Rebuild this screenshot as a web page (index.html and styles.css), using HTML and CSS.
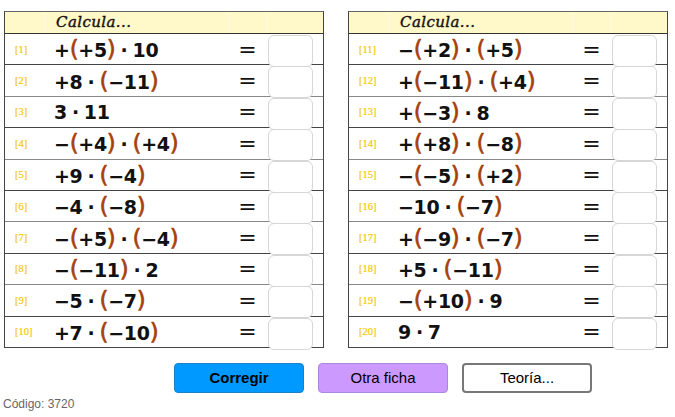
FILE: index.html
```html
<!DOCTYPE html>
<html>
<head>
<meta charset="utf-8">
<link rel="stylesheet" href="styles.css">
</head>
<body>
<div class="sheets">
  <div class="sheet">
    <div class="head"><div class="hc c-num"></div><div class="hc c-expr">Calcula...</div><div class="hc c-eq"></div><div class="hc c-box"></div></div>
    <div class="row"><div class="c-num">[1]</div><div class="c-expr">+<span class="p">(</span>+5<span class="p">)</span><span class="dot">·</span>10</div><div class="c-eq">=</div><div class="c-box"><div class="box"></div></div></div>
    <div class="row"><div class="c-num">[2]</div><div class="c-expr">+8<span class="dot">·</span><span class="p">(</span>−11<span class="p">)</span></div><div class="c-eq">=</div><div class="c-box"><div class="box"></div></div></div>
    <div class="row"><div class="c-num">[3]</div><div class="c-expr">3<span class="dot">·</span>11</div><div class="c-eq">=</div><div class="c-box"><div class="box"></div></div></div>
    <div class="row"><div class="c-num">[4]</div><div class="c-expr">−<span class="p">(</span>+4<span class="p">)</span><span class="dot">·</span><span class="p">(</span>+4<span class="p">)</span></div><div class="c-eq">=</div><div class="c-box"><div class="box"></div></div></div>
    <div class="row"><div class="c-num">[5]</div><div class="c-expr">+9<span class="dot">·</span><span class="p">(</span>−4<span class="p">)</span></div><div class="c-eq">=</div><div class="c-box"><div class="box"></div></div></div>
    <div class="row"><div class="c-num">[6]</div><div class="c-expr">−4<span class="dot">·</span><span class="p">(</span>−8<span class="p">)</span></div><div class="c-eq">=</div><div class="c-box"><div class="box"></div></div></div>
    <div class="row"><div class="c-num">[7]</div><div class="c-expr">−<span class="p">(</span>+5<span class="p">)</span><span class="dot">·</span><span class="p">(</span>−4<span class="p">)</span></div><div class="c-eq">=</div><div class="c-box"><div class="box"></div></div></div>
    <div class="row"><div class="c-num">[8]</div><div class="c-expr">−<span class="p">(</span>−11<span class="p">)</span><span class="dot">·</span>2</div><div class="c-eq">=</div><div class="c-box"><div class="box"></div></div></div>
    <div class="row"><div class="c-num">[9]</div><div class="c-expr">−5<span class="dot">·</span><span class="p">(</span>−7<span class="p">)</span></div><div class="c-eq">=</div><div class="c-box"><div class="box"></div></div></div>
    <div class="row"><div class="c-num">[10]</div><div class="c-expr">+7<span class="dot">·</span><span class="p">(</span>−10<span class="p">)</span></div><div class="c-eq">=</div><div class="c-box"><div class="box"></div></div></div>
  </div>
  <div class="sheet">
    <div class="head"><div class="hc c-num"></div><div class="hc c-expr">Calcula...</div><div class="hc c-eq"></div><div class="hc c-box"></div></div>
    <div class="row"><div class="c-num">[11]</div><div class="c-expr">−<span class="p">(</span>+2<span class="p">)</span><span class="dot">·</span><span class="p">(</span>+5<span class="p">)</span></div><div class="c-eq">=</div><div class="c-box"><div class="box"></div></div></div>
    <div class="row"><div class="c-num">[12]</div><div class="c-expr">+<span class="p">(</span>−11<span class="p">)</span><span class="dot">·</span><span class="p">(</span>+4<span class="p">)</span></div><div class="c-eq">=</div><div class="c-box"><div class="box"></div></div></div>
    <div class="row"><div class="c-num">[13]</div><div class="c-expr">+<span class="p">(</span>−3<span class="p">)</span><span class="dot">·</span>8</div><div class="c-eq">=</div><div class="c-box"><div class="box"></div></div></div>
    <div class="row"><div class="c-num">[14]</div><div class="c-expr">+<span class="p">(</span>+8<span class="p">)</span><span class="dot">·</span><span class="p">(</span>−8<span class="p">)</span></div><div class="c-eq">=</div><div class="c-box"><div class="box"></div></div></div>
    <div class="row"><div class="c-num">[15]</div><div class="c-expr">−<span class="p">(</span>−5<span class="p">)</span><span class="dot">·</span><span class="p">(</span>+2<span class="p">)</span></div><div class="c-eq">=</div><div class="c-box"><div class="box"></div></div></div>
    <div class="row"><div class="c-num">[16]</div><div class="c-expr">−10<span class="dot">·</span><span class="p">(</span>−7<span class="p">)</span></div><div class="c-eq">=</div><div class="c-box"><div class="box"></div></div></div>
    <div class="row"><div class="c-num">[17]</div><div class="c-expr">+<span class="p">(</span>−9<span class="p">)</span><span class="dot">·</span><span class="p">(</span>−7<span class="p">)</span></div><div class="c-eq">=</div><div class="c-box"><div class="box"></div></div></div>
    <div class="row"><div class="c-num">[18]</div><div class="c-expr">+5<span class="dot">·</span><span class="p">(</span>−11<span class="p">)</span></div><div class="c-eq">=</div><div class="c-box"><div class="box"></div></div></div>
    <div class="row"><div class="c-num">[19]</div><div class="c-expr">−<span class="p">(</span>+10<span class="p">)</span><span class="dot">·</span>9</div><div class="c-eq">=</div><div class="c-box"><div class="box"></div></div></div>
    <div class="row"><div class="c-num">[20]</div><div class="c-expr">9<span class="dot">·</span>7</div><div class="c-eq">=</div><div class="c-box"><div class="box"></div></div></div>
  </div>
</div>
<div class="buttons">
  <button class="btn btn-check">Corregir</button>
  <button class="btn btn-other">Otra ficha</button>
  <button class="btn btn-theory">Teoría...</button>
</div>
<div class="code">Código: 3720</div>
</body>
</html>
```
FILE: styles.css
```css
html, body {
  margin: 0;
  padding: 0;
  background: #fff;
}
body {
  width: 675px;
  height: 417px;
  overflow: hidden;
  font-family: "Liberation Sans", Arial, sans-serif;
}
.sheets {
  display: flex;
  gap: 24px;
  padding: 11px 0 0 4px;
}
.sheet {
  width: 318px;
  border: 1px solid #444;
  border-top: 1px solid #666;
}
.head {
  display: flex;
  height: 21px;
  background: #fff8c8;
  border-bottom: 1px solid #333;
}
.hc {
  border-right: 1px solid #fffbe2;
}
.hc.c-box { border-right: 0; }
.head .c-expr {
  font-family: "DejaVu Serif", "Liberation Serif", serif;
  font-style: italic;
  font-weight: normal;
  font-size: 15px;
  line-height: 21px;
  letter-spacing: 0.4px;
  padding-left: 11px;
  color: #111;
  -webkit-text-stroke: 0.4px #111;
}
.c-num { width: 39px; }
.c-expr { width: 185px; box-sizing: border-box; }
.c-eq { width: 37px; }
.c-box { width: 56px; }
.head .c-num, .row .c-num { flex: none; }
.row {
  display: flex;
  align-items: center;
  height: 30.4px;
  border-bottom: 1px solid #444;
}
.row:nth-child(odd) { border-bottom-color: #888; }
.row:last-child { border-bottom: 0; height: 30.4px; }
.row .c-num {
  font-family: "Liberation Serif", "Times New Roman", serif;
  font-size: 10.5px;
  color: #f5c800;
  padding-left: 10px;
  box-sizing: border-box;
  -webkit-text-stroke: 0.2px #f5c800;
}
.row .c-expr {
  font-family: "DejaVu Sans", sans-serif;
  font-weight: bold;
  font-size: 19px;
  color: #111;
  padding-left: 10px;
  white-space: nowrap;
  letter-spacing: -0.3px;
}
.p {
  color: #a5400c;
  font-weight: normal;
  font-family: "DejaVu Sans", sans-serif;
  font-size: 23px;
  -webkit-text-stroke: 0.6px #a5400c;
}
.dot {
  margin: 0 5px;
  font-weight: bold;
}
.row .c-eq {
  font-family: "DejaVu Sans", sans-serif;
  font-size: 22px;
  text-align: center;
  color: #111;
}
.row .c-box {
  position: relative;
  align-self: stretch;
}
.box {
  margin: 1px 0 0 2px;
  width: 43px;
  height: 30px;
  border: 1px solid #d6d6d6;
  border-radius: 6px;
  background: #fff;
  position: relative;
  z-index: 1;
}
.buttons {
  display: flex;
  gap: 14px;
  padding: 15px 0 0 174px;
}
.btn {
  width: 130px;
  height: 30px;
  border-radius: 4px;
  font-family: "Liberation Sans", Arial, sans-serif;
  font-size: 15px;
  color: #000;
  padding: 0;
}
.btn-check {
  background: #0099ff;
  border: 1px solid #1a80c8;
  font-weight: bold;
}
.btn-other {
  background: #cc99ff;
  border: 1px solid #aa88dd;
}
.btn-theory {
  background: #fff;
  border: 2px solid #777;
}
.code {
  font-size: 12px;
  color: #666;
  padding: 4px 0 0 3px;
}
```
